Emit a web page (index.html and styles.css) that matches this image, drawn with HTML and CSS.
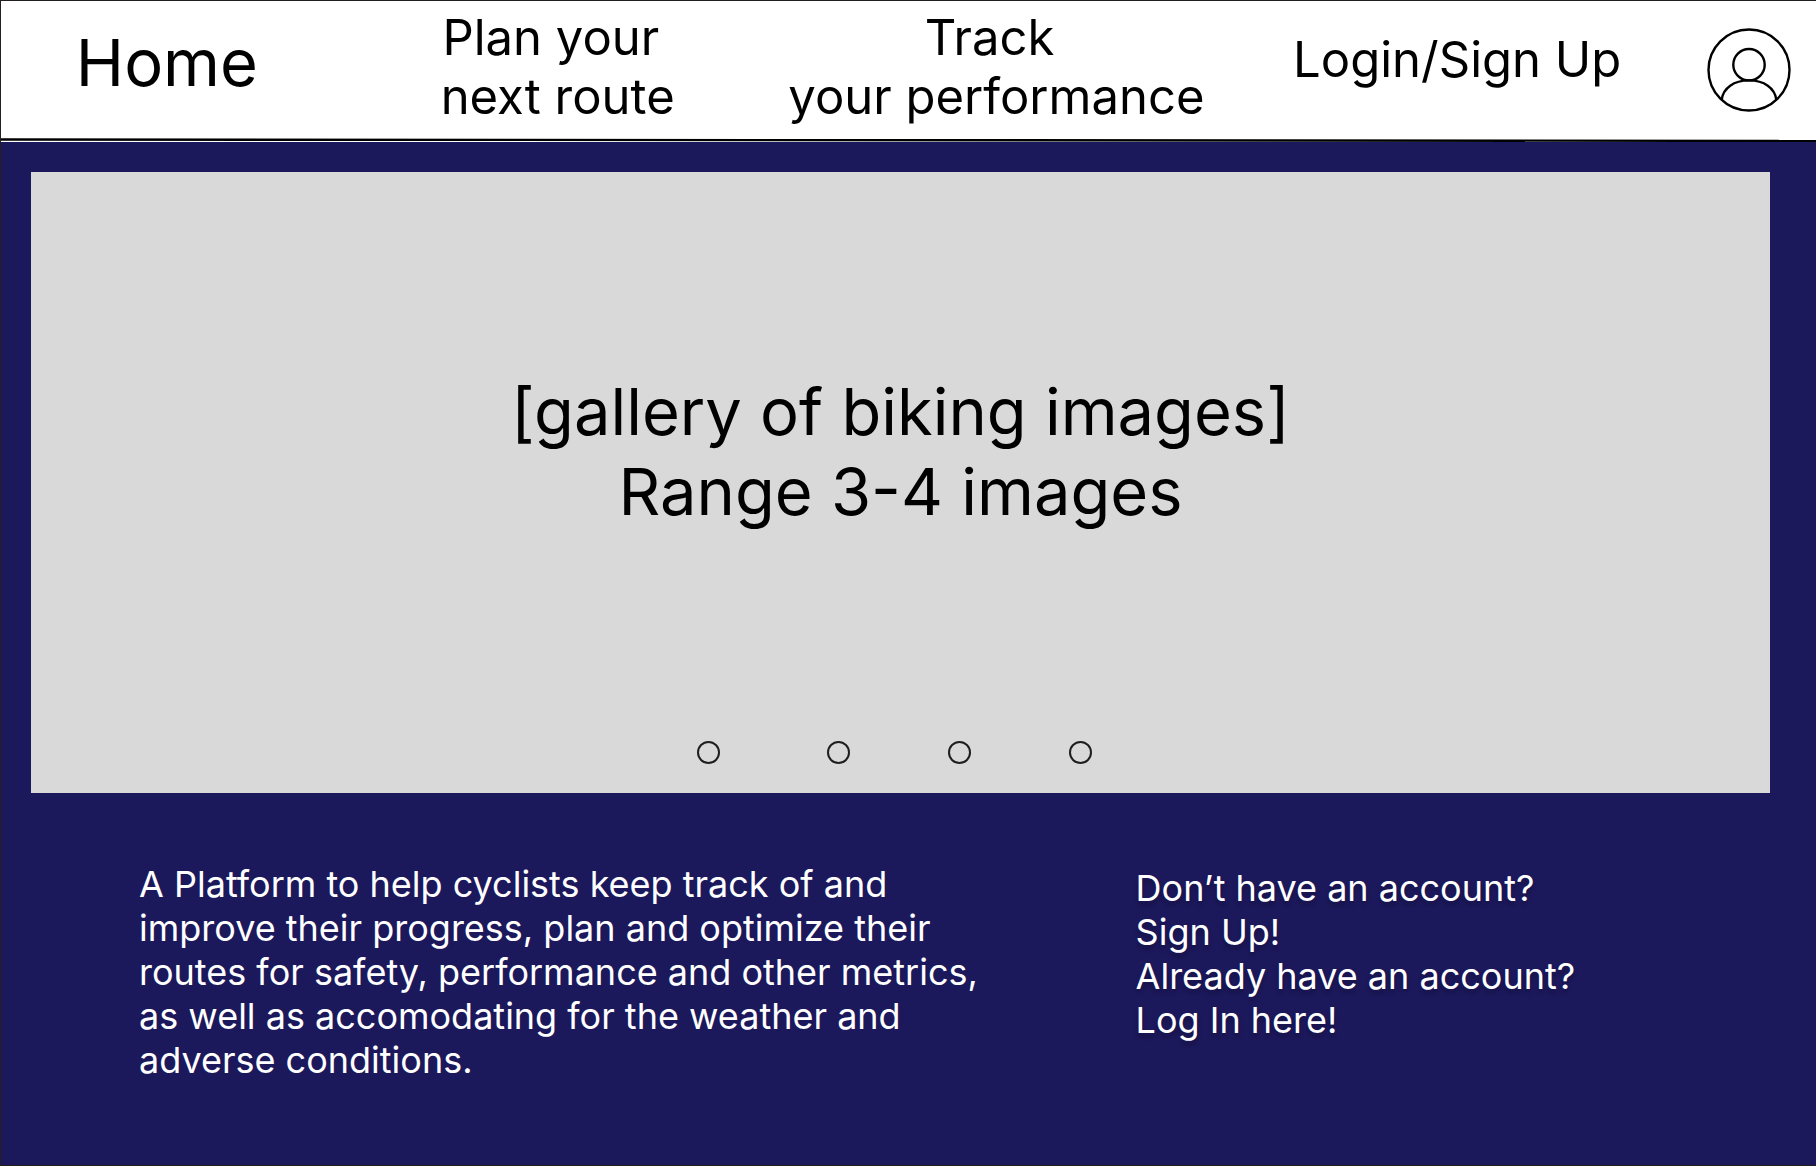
FILE: index.html
```html
<!DOCTYPE html>
<html lang="en">
<head>
<meta charset="utf-8">
<title>Home</title>
<link rel="stylesheet" href="styles.css">
</head>
<body>
<div class="page">
  <header class="header">
    <nav class="nav">
      <a class="nav-link nav-home" href="#">Home</a>
      <a class="nav-link" href="#">Plan your&nbsp;<br>next route</a>
      <a class="nav-link" href="#">Track&nbsp;<br>your performance</a>
      <a class="nav-link nav-login" href="#">Login/Sign Up</a>
      <a class="nav-profile" href="#" aria-label="Profile">
        <svg class="profile-icon" viewBox="0 0 84 84" fill="none" stroke="#000" stroke-width="2.4">
          <circle cx="42" cy="42" r="40.5"/>
          <circle cx="42" cy="36.7" r="15.7"/>
          <path d="M14.6 72C16 60 27 52.4 42 52.4S68 60 69.4 72"/>
        </svg>
      </a>
    </nav>
    <svg class="rule" viewBox="0 0 1816 4" preserveAspectRatio="none">
      <line x1="0" y1="1.5" x2="1816" y2="2.9" stroke="#000" stroke-width="2.4"/>
    </svg>
  </header>
  <main class="main">
    <section class="gallery">
      <p class="gallery-text">[gallery of biking images]<br>Range 3-4 images</p>
      <div class="dots">
        <button class="dot dot-first" type="button" aria-label="Image 1"></button>
        <button class="dot" type="button" aria-label="Image 2"></button>
        <button class="dot" type="button" aria-label="Image 3"></button>
        <button class="dot" type="button" aria-label="Image 4"></button>
      </div>
    </section>
    <section class="info">
      <p class="about">A Platform to help cyclists keep track of and improve their progress, plan and optimize their routes for safety, performance and other metrics, as well as accomodating for the weather and adverse conditions.</p>
      <p class="account">Don’t have an account?<br><a href="#">Sign Up!</a><br>Already have an account?<br><a href="#">Log In here!</a></p>
    </section>
  </main>
</div>
</body>
</html>
```
FILE: styles.css
```css
* {
  box-sizing: border-box;
}

body {
  margin: 0;
  font-family: Inter, "Liberation Sans", sans-serif;
  color: #000;
}

a {
  color: inherit;
  text-decoration: none;
}

p {
  margin: 0;
}

.page {
  min-height: 100vh;
  border: 1px solid #231f20;
  border-right: 0;
  background: #1c185c;
}

.header {
  background: #fff;
}

.nav {
  display: grid;
  grid-template-columns: 332fr 450fr 428fr 494fr 90fr;
  justify-items: center;
  align-items: start;
  min-height: 137px;
  padding: 7px 22px 0 0;
}

.nav-link {
  font-size: 49px;
  line-height: 59px;
  text-align: center;
  white-space: nowrap;
}

.nav-home {
  padding-top: 15px;
  font-size: 65px;
  line-height: 80px;
}

.nav-login {
  padding-top: 22px;
}

.nav-profile {
  padding-top: 20px;
}

.profile-icon {
  display: block;
  width: 84px;
  height: 84px;
}

.rule {
  display: block;
  width: 100%;
  height: 4px;
}

.main {
  padding: 30px 46px 0 30px;
}

.gallery {
  display: flex;
  flex-direction: column;
  justify-content: space-between;
  align-items: center;
  min-height: 621px;
  padding: 200px 0 29px;
  background: #d9d9d9;
}

.gallery-text {
  font-size: 65px;
  line-height: 80px;
  text-align: center;
}

.dots {
  display: flex;
  gap: 98px;
  padding-right: 12px;
}

.dot {
  width: 23px;
  height: 23px;
  padding: 0;
  border: 2px solid #1e1e1e;
  border-radius: 50%;
  background: transparent;
}

.dot-first {
  margin-right: 9px;
}

.info {
  display: grid;
  grid-template-columns: 996fr 634fr;
  padding: 69px 0 40px 108px;
  font-size: 36px;
  line-height: 44px;
  color: #fff;
}

.about {
  max-width: 860px;
}

.account {
  padding-top: 4px;
  text-shadow: 0 4px 4px rgba(0, 0, 0, 0.25);
}
```
